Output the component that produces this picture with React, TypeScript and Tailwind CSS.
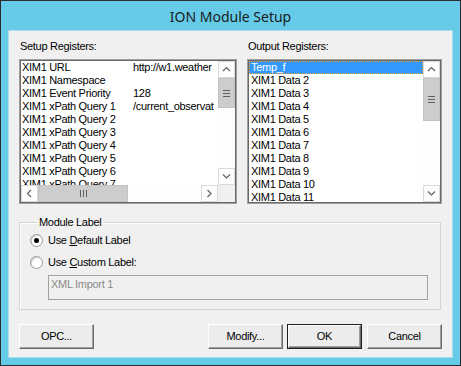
import type { ReactNode } from 'react'

const setupRows: [string, string][] = [
  ['XIM1 URL', 'http://w1.weather'],
  ['XIM1 Namespace', ''],
  ['XIM1 Event Priority', '128'],
  ['XIM1 xPath Query 1', '/current_observat'],
  ['XIM1 xPath Query 2', ''],
  ['XIM1 xPath Query 3', ''],
  ['XIM1 xPath Query 4', ''],
  ['XIM1 xPath Query 5', ''],
  ['XIM1 xPath Query 6', ''],
  ['XIM1 xPath Query 7', ''],
]

const outputRows = [
  'Temp_f',
  'XIM1 Data 2',
  'XIM1 Data 3',
  'XIM1 Data 4',
  'XIM1 Data 5',
  'XIM1 Data 6',
  'XIM1 Data 7',
  'XIM1 Data 8',
  'XIM1 Data 9',
  'XIM1 Data 10',
  'XIM1 Data 11',
]

function Chevron({ dir }: { dir: 'up' | 'down' | 'left' | 'right' }) {
  const d = {
    up: 'M1 5 L4.5 1.5 L8 5',
    down: 'M1 1.5 L4.5 5 L8 1.5',
    left: 'M5 1 L1.5 4.5 L5 8',
    right: 'M1.5 1 L5 4.5 L1.5 8',
  }[dir]
  const horiz = dir === 'up' || dir === 'down'
  return (
    <svg width={horiz ? 9 : 7} height={horiz ? 7 : 9} viewBox={horiz ? '0 0 9 7' : '0 0 7 9'}>
      <path d={d} fill="none" stroke="#606060" strokeWidth="1.2" />
    </svg>
  )
}

function ArrowBox({ dir }: { dir: 'up' | 'down' | 'left' | 'right' }) {
  return (
    <div className="w-[17px] h-[17px] shrink-0 flex items-center justify-center bg-[#fdfdfd] border border-[#dadada]">
      <Chevron dir={dir} />
    </div>
  )
}

function VScroll({ thumbHeight }: { thumbHeight: number }) {
  return (
    <div className="w-[17px] shrink-0 flex flex-col bg-[#fdfdfd]">
      <ArrowBox dir="up" />
      <div className="flex-1 flex flex-col">
        <div
          className="w-[17px] bg-[#cdcdcd] border border-[#c2c2c2] flex flex-col items-center justify-center gap-[2px]"
          style={{ height: thumbHeight }}
        >
          <div className="w-[7px] h-[1px] bg-[#606060]" />
          <div className="w-[7px] h-[1px] bg-[#606060]" />
          <div className="w-[7px] h-[1px] bg-[#606060]" />
        </div>
      </div>
      <ArrowBox dir="down" />
    </div>
  )
}

function Sunken({ children, className = '' }: { children: ReactNode; className?: string }) {
  return (
    <div className={`border border-[#a0a0a0] shadow-[inset_0_0_0_1px_#696969] p-[1px] bg-white ${className}`}>
      {children}
    </div>
  )
}

function Btn({ label, def = false, className = '' }: { label: string; def?: boolean; className?: string }) {
  return (
    <div className={`w-[75px] h-[25px] ${def ? 'border border-[#202020]' : ''} ${className}`}>
      <div className="w-full h-full border-t border-l border-white border-r border-b border-r-[#696969] border-b-[#696969] shadow-[inset_-1px_-1px_0_#a0a0a0] bg-[#ececec] flex items-center justify-center">
        {label}
      </div>
    </div>
  )
}

function Radio({ checked }: { checked: boolean }) {
  return (
    <div className="w-[13px] h-[13px] rounded-full border border-[#9a9a9a] bg-white flex items-center justify-center shadow-[inset_1px_1px_0_#d0d0d0]">
      {checked && <div className="w-[5px] h-[5px] rounded-full bg-black" />}
    </div>
  )
}

export default function App() {
  return (
    <div
      className="w-[461px] h-[366px] bg-[#65cbe9] border border-[#2b2b2b] flex flex-col text-[11px] leading-[13px] tracking-[-0.3px] text-black"
      style={{ fontFamily: '"Liberation Sans", Arial, sans-serif' }}
    >
      <div
        className="h-[29px] shrink-0 flex items-center justify-center text-[14px] tracking-normal text-[#1b1b1b] pt-[1px]"
        style={{ fontFamily: '"Noto Sans", "Open Sans", sans-serif' }}
      >
        ION Module Setup
      </div>
      <div className="mx-[7px] mb-[7px] flex-1 bg-[#f0f0f0] border border-[#a9dcec] flex flex-col px-[10px] pt-[9px]">
        <div className="flex gap-[10px]">
          <div className="w-[218px] flex flex-col gap-[6px]">
            <div className="pl-[1px]">Setup Registers:</div>
            <Sunken className="h-[145px] flex flex-col">
              <div className="flex-1 flex min-h-0">
                <div className="flex-1 overflow-hidden pl-[1px]">
                  {setupRows.map(([k, v]) => (
                    <div key={k} className="h-[13px] flex whitespace-nowrap">
                      <span className="w-[111px] shrink-0">{k}</span>
                      <span>{v}</span>
                    </div>
                  ))}
                </div>
                <VScroll thumbHeight={30} />
              </div>
              <div className="h-[17px] shrink-0 flex bg-[#fdfdfd]">
                <ArrowBox dir="left" />
                <div className="w-[90px] bg-[#cdcdcd] border border-[#c2c2c2] flex items-center justify-center gap-[2px]">
                  <div className="w-[1px] h-[7px] bg-[#606060]" />
                  <div className="w-[1px] h-[7px] bg-[#606060]" />
                  <div className="w-[1px] h-[7px] bg-[#606060]" />
                </div>
                <div className="flex-1" />
                <ArrowBox dir="right" />
                <div className="w-[17px] bg-[#f0f0f0]" />
              </div>
            </Sunken>
          </div>
          <div className="w-[195px] flex flex-col gap-[6px]">
            <div className="pl-[1px]">Output Registers:</div>
            <Sunken className="h-[145px] flex">
              <div className="flex-1 overflow-hidden">
                {outputRows.map((r, i) =>
                  i === 0 ? (
                    <div
                      key={r}
                      className="h-[13px] bg-[#3399ff] text-white border border-dotted border-[#f59a3a] pl-[1px] leading-[11px]"
                    >
                      {r}
                    </div>
                  ) : (
                    <div key={r} className="h-[13px] pl-[2px] whitespace-nowrap">
                      {r}
                    </div>
                  ),
                )}
              </div>
              <VScroll thumbHeight={43} />
            </Sunken>
          </div>
        </div>

        <fieldset className="mt-[12px] w-[422px] border border-[#d5d5d5] shadow-[inset_1px_1px_0_#ffffff] px-[10px] pb-[9px] pt-[3px] min-w-0">
          <legend className="ml-[7px] px-[2px]">Module Label</legend>
          <div className="flex flex-col">
            <div className="flex items-center h-[16px] gap-[5px]">
              <Radio checked />
              <span>
                Use <span className="underline underline-offset-1">D</span>efault Label
              </span>
            </div>
            <div className="flex items-center h-[16px] gap-[5px] mt-[6px]">
              <Radio checked={false} />
              <span>
                Use <span className="underline underline-offset-1">C</span>ustom Label:
              </span>
            </div>
            <div className="ml-[18px] mt-[5px] w-[380px] h-[25px] border border-[#a0a0a0] bg-[#f0f0f0] text-[#8a8a8a] px-[2px] pt-[2px]">
              XML Import 1
            </div>
          </div>
        </fieldset>

        <div className="flex mt-[14px] w-[423px]">
          <Btn label="OPC..." />
          <Btn label="Modify..." className="ml-auto" />
          <Btn label="OK" def className="ml-[4px]" />
          <Btn label="Cancel" className="ml-[5px]" />
        </div>
      </div>
    </div>
  )
}
